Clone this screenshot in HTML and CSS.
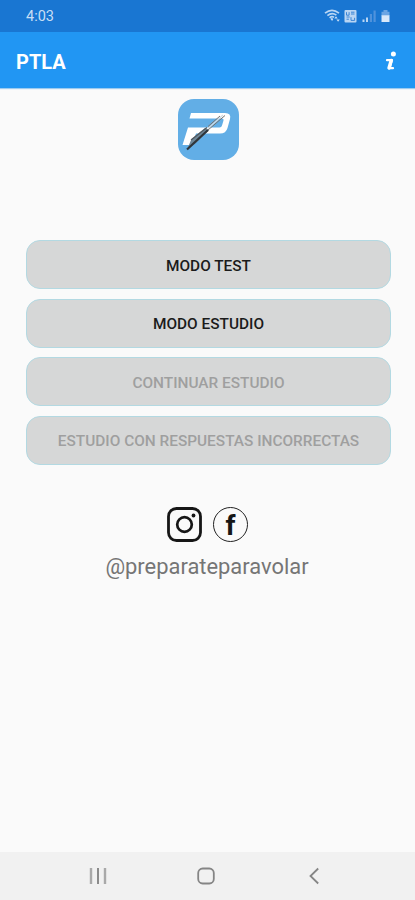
FILE: index.html
```html
<!DOCTYPE html>
<html lang="es">
<head>
    <meta charset="UTF-8">
    <meta name="viewport" content="width=device-width, initial-scale=1.0">
    <title>PTLA</title>
    <link rel="stylesheet" href="styles.css">
</head>
<body>
    <div class="status-bar">
        <span class="clock">4:03</span>
        <svg class="status-icons" width="68" height="16" viewBox="0 0 68 16">
            <!-- wifi -->
            <g fill="none" stroke="#b9d5f3" stroke-width="1.7">
                <path d="M1 5.2Q8 -.6 15 5.2"/>
                <path d="M3.4 7.6Q8 3.8 12.4 7.2"/>
                <path d="M5.6 9.8Q8 7.8 10 9.4"/>
            </g>
            <path d="M6.4 10.8L8 10l1.3 1-1.2 2zM10.3 10.5l1.7-2.2 1.7 2.2zM12.4 11.4h3.4L14.1 13.8z" fill="#c8def6"/>
            <!-- volte -->
            <rect x="20.5" y="2" width="12" height="12.5" rx="1" fill="#b9d5f3"/>
            <path d="M22.5 4.2v3h2.6v-3M27 4.2h3.5M27 6h3.5M22.5 9h3.2M22.5 11.2h2.4M27 9.2v3.2h3.6V9.8" fill="none" stroke="#3b85d5" stroke-width="1"/>
            <!-- signal -->
            <path d="M38.5 11.5h2V14h-2zM42 9.5h2V14h-2z" fill="#b9d5f3"/>
            <path d="M45.8 6h2.2v8h-2.2zM49.5 2.5h2.2V14h-2.2z" fill="#4f92dc"/>
            <!-- battery -->
            <path d="M59.5 2h4v1.8h2V8h-8V3.8h2z" fill="#6ba5e4"/>
            <path d="M57.5 7.3h8V14h-8z" fill="#d8e8fa"/>
        </svg>
    </div>

    <div class="app-bar">
        <h1>PTLA</h1>
        <a href="#" class="info">
            <svg width="12" height="20" viewBox="0 0 12 20">
                <circle cx="8.4" cy="2.9" r="2.5" fill="#fff"/>
                <path d="M2 9.2H7L4.6 17.2H8" fill="none" stroke="#fff" stroke-width="2.2" stroke-linecap="round" stroke-linejoin="round"/>
                <path d="M6.2 9.4L4 17" stroke="#fff" stroke-width="3.4" stroke-linecap="round"/>
            </svg>
        </a>
    </div>

    <div class="main">
        <svg class="logo" width="61" height="61" viewBox="0 0 61 61">
            <rect width="61" height="61" rx="16" fill="#62aee6"/>
            <path d="M13 14H47Q53.5 14 52 20L49.5 29Q48 34.5 42 34.5H18L14 46H4.5L10 28.5H41.5Q43.5 28.5 44 26.5L45.5 21.5Q46 19.5 44 19.5H11.5z" fill="#fff"/>
            <path d="M9 50.5L13.5 40 27 29 31 31 18 44z" fill="#6e8798"/>
            <path d="M9 50.5L30 31" fill="none" stroke="#2f353a" stroke-width="2.2"/>
            <path d="M13 41L29 28.5" fill="none" stroke="#50575c" stroke-width="1.3"/>
            <path d="M30 31L47 16.5M30 27.5L42 17" fill="none" stroke="#777471" stroke-width="1"/>
            <path d="M30 29.5L45 16" fill="none" stroke="#d3dce2" stroke-width="1.2"/>
        </svg>

        <div class="menu">
            <button type="button">MODO TEST</button>
            <button type="button">MODO ESTUDIO</button>
            <button type="button" disabled>CONTINUAR ESTUDIO</button>
            <button type="button" disabled>ESTUDIO CON RESPUESTAS INCORRECTAS</button>
        </div>

        <div class="social">
            <svg width="35" height="35" viewBox="0 0 35 35">
                <rect x="1.5" y="1.5" width="32" height="32" rx="8" fill="none" stroke="#161616" stroke-width="2.8"/>
                <circle cx="17.5" cy="17.5" r="7.3" fill="none" stroke="#161616" stroke-width="2.7"/>
                <circle cx="26.5" cy="8.5" r="1.9" fill="#161616"/>
            </svg>
            <span class="facebook">f</span>
        </div>
        <p class="handle">@preparateparavolar</p>
    </div>

    <div class="nav-bar">
        <svg width="18" height="18" viewBox="0 0 18 18">
            <path d="M2 1v16M16 1v16" stroke="#a9a9a9" stroke-width="2.4"/>
            <path d="M9 1v16" stroke="#8b8b8b" stroke-width="2"/>
        </svg>
        <svg width="18" height="18" viewBox="0 0 18 18">
            <rect x="1.2" y="1.5" width="15.6" height="15" rx="4.5" fill="none" stroke="#858585" stroke-width="1.8"/>
        </svg>
        <svg width="18" height="18" viewBox="0 0 18 18">
            <path d="M13.2 1.5L5.5 9l7.7 7.5" fill="none" stroke="#858585" stroke-width="1.8"/>
        </svg>
    </div>
</body>
</html>
```

FILE: styles.css
```css
body {
    margin: 0;
    height: 900px;
    display: flex;
    flex-direction: column;
    background-color: #fafafa;
    font-family: Roboto, Arial, sans-serif;
}

.status-bar {
    height: 32px;
    padding: 0 23px 0 26px;
    box-sizing: border-box;
    display: flex;
    align-items: center;
    justify-content: space-between;
    background-color: #1976d2;
}

.clock {
    color: #c8def5;
    font-size: 14.5px;
    line-height: 30px;
    padding-top: 2px;
}

.app-bar {
    height: 56px;
    padding: 0 18px 0 16px;
    box-sizing: border-box;
    display: flex;
    align-items: center;
    justify-content: space-between;
    background-color: #2196f3;
    box-shadow: 0 1px 1px #9ccbf0;
}

.app-bar h1 {
    margin: 0;
    padding-top: 3px;
    color: #fff;
    font-size: 20px;
    font-weight: 700;
}

.info {
    display: flex;
    padding-top: 2px;
}

.main {
    flex: 1;
    display: flex;
    flex-direction: column;
    align-items: center;
    padding: 11px 24px 0 26px;
}

.menu {
    width: 100%;
    margin-top: 80px;
    display: flex;
    flex-direction: column;
    gap: 9.5px;
}

.menu button {
    height: 49px;
    padding: 2px 0 0;
    border: 1px solid #b3d9e2;
    border-radius: 14px;
    background-color: #d6d7d7;
    color: #1b1b1b;
    font-family: inherit;
    font-size: 15.4px;
    font-weight: 500;
}

.menu button:disabled {
    color: #9f9f9f;
}

.social {
    margin: 42px 2px 0 0;
    display: flex;
    gap: 11px;
}

.facebook {
    width: 35px;
    height: 35px;
    box-sizing: border-box;
    border: 1.4px solid #222;
    border-radius: 50%;
    color: #161616;
    font-size: 28px;
    font-weight: 700;
    line-height: 35px;
    text-align: center;
}

.handle {
    margin: 12px 3px 0 0;
    color: #757575;
    font-size: 21.9px;
    line-height: 26px;
}

.nav-bar {
    height: 48px;
    display: flex;
    align-items: center;
    justify-content: center;
    gap: 90px;
    padding-right: 3px;
    background-color: #f1f1f1;
}
```
